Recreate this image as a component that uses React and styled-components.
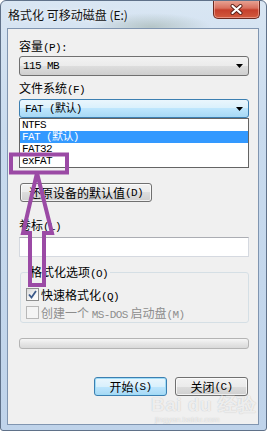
import React from 'react';
import styled, { createGlobalStyle, css } from 'styled-components';

const GlobalStyle = createGlobalStyle`
  html, body {
    margin: 0;
    padding: 0;
    background: #fff;
  }
  body {
    font-family: "Noto Sans CJK SC", "Liberation Sans", sans-serif;
    font-size: 12px;
    color: #000;
    overflow: hidden;
  }
`;

const Window = styled.div`
  position: relative;
  width: 267px;
  height: 431px;
  box-sizing: border-box;
  display: flex;
  flex-direction: column;
  border: 1px solid #5f7189;
  border-radius: 6px 6px 3px 3px;
  background:
    radial-gradient(ellipse 60px 14px at 150px 26px, rgba(120, 140, 120, 0.35), transparent),
    linear-gradient(180deg, #d9e6f3 0%, #c9dbee 30%, #bfd3ea 100%);
  padding: 0 7px 5px 6px;
  overflow: hidden;
`;

const TitleBar = styled.div`
  height: 27px;
  display: flex;
  justify-content: space-between;
  align-items: center;
`;

const Title = styled.div`
  margin-left: 1px;
  font-size: 12px;
  line-height: 16px;
  color: #111;
  text-shadow: 0 0 4px rgba(255, 255, 255, 0.9);
`;

const CloseButton = styled.div`
  align-self: flex-start;
  margin-top: -1px;
  margin-right: -1px;
  width: 47px;
  height: 19px;
  box-sizing: border-box;
  display: flex;
  align-items: center;
  justify-content: center;
  border: 1px solid #6b2a20;
  border-top: none;
  border-radius: 0 0 5px 5px;
  background: linear-gradient(180deg, #e9a899 0%, #d9705e 45%, #c6402c 55%, #d25b3f 100%);
  box-shadow: inset 0 0 0 1px rgba(255, 200, 190, 0.5);
`;

const Client = styled.div`
  flex: 1;
  display: flex;
  flex-direction: column;
  background: #f0f0f0;
  border: 1px solid #8095b0;
  padding: 10px 9px 0 11px;
`;

const Mono = styled.span`
  font-family: "Liberation Mono", monospace;
  font-size: 11px;
  letter-spacing: -0.6px;
`;

const Label = styled.div`
  margin-top: ${(p) => p.$mt || 0}px;
  height: 14px;
  line-height: 14px;
  white-space: nowrap;
`;

const Caret = () => (
  <svg width="7" height="4" viewBox="0 0 7 4">
    <polygon points="0,0 7,0 3.5,4" fill="#000" />
  </svg>
);

const Combo = styled.div`
  margin-top: ${(p) => p.$mt || 0}px;
  height: ${(p) => p.$h || 20}px;
  box-sizing: border-box;
  display: flex;
  align-items: center;
  justify-content: space-between;
  padding: 0 5px 0 3px;
  border: 1px solid #707070;
  border-radius: 3px;
  background: linear-gradient(180deg, #f2f2f2 0%, #ebebeb 50%, #dddddd 50%, #cfcfcf 100%);
  ${(p) =>
    p.$open &&
    css`
      border-color: #3c7fb1;
      background: linear-gradient(180deg, #eaf6fd 0%, #d9f0fc 50%, #bee6fd 50%, #a7d9f5 100%);
    `}
`;

const DropWrap = styled.div`
  position: relative;
  margin-top: 4px;
`;

/* the rows the open list covers (allocation unit size) */
const Covered = styled.div`
  height: 43px;
`;

const List = styled.div`
  position: absolute;
  top: 100%;
  left: 0;
  right: 0;
  z-index: 2;
  background: #fff;
  border: 1px solid #646464;
`;

const Item = styled.div`
  height: 12px;
  line-height: 12px;
  padding-left: 2px;
  white-space: nowrap;
  font-family: "Liberation Mono", "Noto Sans CJK SC", monospace;
  font-size: 11px;
  letter-spacing: -0.6px;
  background: ${(p) => (p.$selected ? '#3399ff' : 'transparent')};
  color: ${(p) => (p.$selected ? '#fff' : '#000')};
`;

const Button = styled.div`
  margin-top: ${(p) => p.$mt || 0}px;
  margin-left: ${(p) => p.$ml || 0}px;
  width: ${(p) => p.$w}px;
  height: 19px;
  box-sizing: border-box;
  display: flex;
  align-items: center;
  justify-content: center;
  white-space: nowrap;
  border: 1px solid #707070;
  border-radius: 3px;
  background: linear-gradient(180deg, #f2f2f2 0%, #ebebeb 50%, #dddddd 50%, #cfcfcf 100%);
  box-shadow: inset 0 0 0 1px rgba(255, 255, 255, 0.7);
  ${(p) =>
    p.$default &&
    css`
      border-color: #3c7fb1;
      background: linear-gradient(180deg, #eaf6fd 0%, #d9f0fc 50%, #bee6fd 50%, #a7d9f5 100%);
      box-shadow: inset 0 0 0 1px #9fdcf7;
    `}
`;

const TextInput = styled.div`
  margin-top: 5px;
  height: 20px;
  box-sizing: border-box;
  background: #fff;
  border: 1px solid #d5d9e0;
  border-top-color: #abadb3;
`;

const Group = styled.fieldset`
  margin: 8px 0 0 1px;
  padding: 0 5px 1px;
  min-width: 0;
  border: 1px solid #d5dfe5;
  border-radius: 3px;
`;

const Legend = styled.legend`
  margin-left: 2px;
  padding: 0 2px;
  height: 14px;
  line-height: 14px;
`;

const CheckRow = styled.div`
  margin-top: ${(p) => p.$mt || 0}px;
  height: 18px;
  display: flex;
  align-items: center;
  gap: 2px;
  white-space: nowrap;
  color: ${(p) => (p.$disabled ? '#8d8d8d' : '#000')};
`;

const Box = styled.div`
  width: 13px;
  height: 13px;
  box-sizing: border-box;
  display: flex;
  align-items: center;
  justify-content: center;
  border: 1px solid ${(p) => (p.$disabled ? '#b8b8b8' : '#8e8f8f')};
  background: ${(p) =>
    p.$disabled ? '#f4f4f4' : 'linear-gradient(135deg, #d8d8d8 0%, #f7f7f7 60%, #ffffff 100%)'};
`;

const Progress = styled.div`
  margin-top: 15px;
  height: 11px;
  box-sizing: border-box;
  border: 1px solid #b4b4b4;
  border-radius: 3px;
  background: linear-gradient(180deg, #f6f6f6 0%, #e6e6e6 50%, #d9d9d9 100%);
`;

const ButtonRow = styled.div`
  margin-top: 28px;
  padding-right: 1px;
  display: flex;
  justify-content: flex-end;
  gap: 8px;
`;

const Watermark = styled.div`
  position: absolute;
  left: 150px;
  top: 394px;
  pointer-events: none;
  color: rgba(255, 255, 255, 0.75);
  text-shadow: 0 0 1px rgba(110, 110, 110, 0.45);
  font-family: "Liberation Sans", sans-serif;
`;

const MarkBig = styled.div`
  font-size: 19px;
  font-weight: bold;
  line-height: 20px;
  letter-spacing: 0.5px;
`;

const MarkSmall = styled.div`
  font-size: 8px;
  line-height: 9px;
  padding-left: 4px;
`;

const Annotation = styled.svg`
  position: absolute;
  left: 0;
  top: 0;
  z-index: 5;
  pointer-events: none;
`;

export default function App() {
  return (
    <>
      <GlobalStyle />
      <Window>
        <TitleBar>
          <Title>格式化 可移动磁盘 (E:)</Title>
          <CloseButton>
            <svg width="13" height="11" viewBox="0 0 13 11">
              <path d="M2.5 2 L10.5 9 M10.5 2 L2.5 9" stroke="#5a2018" strokeWidth="4" strokeLinecap="round" />
              <path d="M2.5 2 L10.5 9 M10.5 2 L2.5 9" stroke="#fff" strokeWidth="2.2" strokeLinecap="round" />
            </svg>
          </CloseButton>
        </TitleBar>

        <Client>
          <Label>容量<Mono>(P):</Mono></Label>
          <Combo $mt={3}>
            <Mono>115 MB</Mono>
            <Caret />
          </Combo>

          <Label $mt={5}>文件系统<Mono>(F)</Mono></Label>
          <DropWrap>
            <Combo $open $h={19}>
              <Item as="span">FAT (默认)</Item>
              <Caret />
            </Combo>
            <List>
              <Item>NTFS</Item>
              <Item $selected>FAT (默认)</Item>
              <Item>FAT32</Item>
              <Item>exFAT</Item>
            </List>
          </DropWrap>
          <Covered />

          <Button $mt={22} $ml={1} $w={132}>
            还原设备的默认值<Mono>(D)</Mono>
          </Button>

          <Label $mt={16}>卷标<Mono>(L)</Mono></Label>
          <TextInput />

          <Group>
            <Legend>格式化选项<Mono>(O)</Mono></Legend>
            <CheckRow $mt={6}>
              <Box>
                <svg width="9" height="9" viewBox="0 0 9 9">
                  <path d="M1 4.5 L3.5 7.5 L8 1" stroke="#3c5a8a" strokeWidth="1.8" fill="none" />
                </svg>
              </Box>
              <span>快速格式化<Mono>(Q)</Mono></span>
            </CheckRow>
            <CheckRow $disabled>
              <Box $disabled />
              <span>创建一个 <Mono>MS-DOS</Mono> 启动盘<Mono>(M)</Mono></span>
            </CheckRow>
          </Group>

          <Progress />

          <ButtonRow>
            <Button $default $w={73}>开始<Mono>(S)</Mono></Button>
            <Button $w={73}>关闭<Mono>(C)</Mono></Button>
          </ButtonRow>
        </Client>

        <Watermark>
          <MarkBig>Bai du 经验</MarkBig>
          <MarkSmall>jingyan.baidu.com</MarkSmall>
        </Watermark>

        <Annotation width="267" height="431" viewBox="0 0 267 431">
          <rect x="10" y="153.5" width="56" height="18" fill="none" stroke="#9b4aa5" strokeWidth="4" />
          <polygon
            points="36,172 51,232 43,232 43,284 29,284 29,232 22,232"
            fill="none"
            stroke="#9b4aa5"
            strokeWidth="4"
            strokeLinejoin="miter"
          />
        </Annotation>
      </Window>
    </>
  );
}
